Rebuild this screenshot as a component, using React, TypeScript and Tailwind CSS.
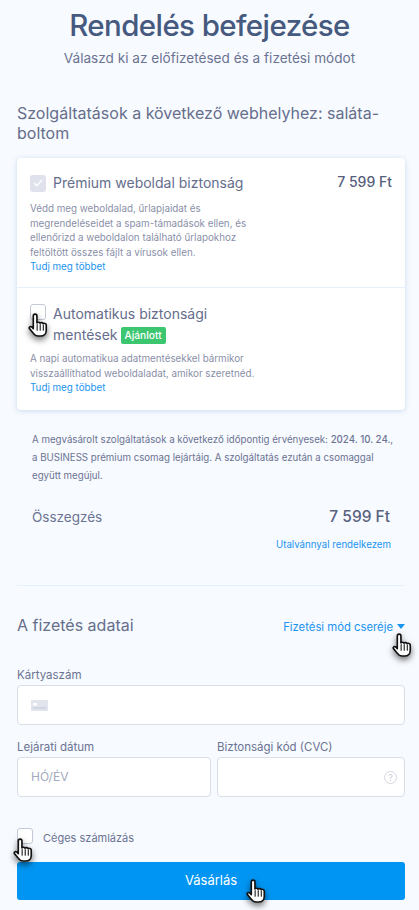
import React from "react";

const ff = { fontFamily: '"Inter", "Liberation Sans", sans-serif' };

// cursor drawn over the page, same hand every time
function Hand({ className }: { className: string }) {
  return (
    <svg className={`absolute pointer-events-none ${className}`} width="20" height="24" viewBox="1 1 19 25" style={{ filter: "drop-shadow(0 3px 3px rgba(0,0,0,0.55))" }}>
      <path
        d="M7.5 2.2c1.1 0 1.9.9 1.9 2v7.1c.3-.9 2.9-1.1 3.3.3.5-.9 2.800-.9 3.200.5.7-.7 3-.4 3.200 1.300v5.800c0 3-2.100 5.800-5.900 5.800h-2.600c-2.500 0-3.700-1.100-5-3L1.600 17.300c-.8-1.300.9-2.900 2.300-1.800l1.700 1.700V4.200c0-1.100.8-2 1.900-2z"
        fill="#fff"
        stroke="#111"
        strokeWidth="1.7"
        strokeLinejoin="round"
      />
      <path d="M9.600 13v6M12.800 13v6M16 13.500V19" stroke="#111" strokeWidth="1.1" strokeLinecap="round" />
    </svg>
  );
}

function ServiceText({ lines }: { lines: string[] }) {
  return (
    <div className="text-[9.8px] leading-[14.5px] text-[#8a8fa8] whitespace-nowrap">
      {lines.map((l) => (
        <div key={l}>{l}</div>
      ))}
      <a className="text-[#1b94f0]">Tudj meg többet</a>
    </div>
  );
}

export default function App() {
  return (
    <div style={ff} className="relative w-[419px] h-[910px] overflow-hidden bg-[#f7faff] text-[#5c6483]">
      <h1 className="pt-[6px] text-center text-[29.5px] leading-[38px] tracking-[-0.6px] font-medium text-[#46597f]">Rendelés befejezése</h1>
      <p className="mt-[4px] text-center text-[13.6px] leading-[20px] text-[#6b7392]">Válaszd ki az előfizetésed és a fizetési módot</p>

      <h2 className="ml-[17px] mt-[35px] text-[16px] leading-[20px] text-[#666e8c] whitespace-nowrap">
        Szolgáltatások a következő webhelyhez: saláta-
        <br />
        boltom
      </h2>

      <div className="ml-[17px] mt-[15px] w-[388px] h-[252px] rounded-[4px] bg-white shadow-[0_1px_5px_rgba(120,160,210,0.35)]">
        <div className="h-[130px] px-[13px] pt-[15px] border-b border-[#e6f0fa]">
          <div className="flex justify-between">
            <div className="flex items-center gap-[7px]">
              <span className="flex items-center justify-center w-[16px] h-[17px] rounded-[3px] bg-[#dfe2ec]">
                <svg width="10" height="8" viewBox="0 0 10 8" fill="none">
                  <path d="M1 4l2.800 2.800L9 1" stroke="#fff" strokeWidth="1.4" />
                </svg>
              </span>
              <span className="text-[14px] leading-[20px] text-[#656d8c]">Prémium weboldal biztonság</span>
            </div>
            <span className="text-[14px] leading-[18px] font-medium text-[#565e7c]">7 599 Ft</span>
          </div>
          <div className="mt-[9px]">
            <ServiceText
              lines={[
                "Védd meg weboldalad, űrlapjaidat és",
                "megrendeléseidet a spam-támadások ellen, és",
                "ellenőrizd a weboldalon található űrlapokhoz",
                "feltöltött összes fájlt a vírusok ellen.",
              ]}
            />
          </div>
        </div>
        <div className="px-[13px] pt-[15px]">
          <div className="flex gap-[7px]">
            <span className="mt-[1px] w-[16px] h-[16px] rounded-[3px] border border-[#c4c9d8] bg-white"></span>
            <div className="text-[14px] leading-[21px] text-[#656d8c]">
              Automatikus biztonsági
              <br />
              mentések
              <span className="ml-[3px] inline-block px-[4px] align-[1px] rounded-[2px] bg-[#3bc66f] text-white text-[10.2px] leading-[17px] font-medium">Ajánlott</span>
            </div>
          </div>
          <div className="mt-[7px]">
            <ServiceText lines={["A napi automatikua adatmentésekkel bármikor", "visszaállíthatod weboldaladat, amikor szeretnéd."]} />
          </div>
        </div>
      </div>

      <p className="ml-[32px] mt-[21px] text-[9.7px] leading-[18px] text-[#6b7392] whitespace-nowrap">
        A megvásárolt szolgáltatások a következő időpontig érvényesek: <b className="font-medium">2024. 10. 24.</b>,
        <br />a BUSINESS prémium csomag lejártáig. A szolgáltatás ezután a csomaggal
        <br />
        együtt megújul.
      </p>
      <div className="ml-[32px] mt-[22px] w-[358px] flex justify-between items-center">
        <span className="text-[13.5px] leading-[20px] text-[#6b7392]">Összegzés</span>
        <span className="text-[15.5px] leading-[20px] font-medium text-[#5a6280]">7 599 Ft</span>
      </div>
      <div className="ml-[32px] mt-[10px] w-[359px] text-right text-[9.7px] leading-[16px] text-[#1b94f0]">Utalvánnyal rendelkezem</div>

      <div className="ml-[17px] mt-[32px] w-[388px] border-t border-[#e6f0fa]"></div>

      <div className="ml-[17px] mt-[29px] w-[388px] flex justify-between items-center">
        <span className="text-[16px] leading-[20px] text-[#666e8c]">A fizetés adatai</span>
        <span className="flex items-center gap-[4px] text-[11.3px] leading-[16px] pt-[3px] text-[#1b94f0]">
          Fizetési mód cseréje
          <svg width="8" height="5" viewBox="0 0 8 5">
            <path d="M0 0h8L4 5z" fill="#1b94f0" />
          </svg>
        </span>
      </div>

      <div className="ml-[17px] mt-[32px] w-[388px]">
        <label className="block text-[11.5px] leading-[16px] text-[#6b7392]">Kártyaszám</label>
        <div className="mt-[2px] flex items-center h-[40px] px-[13px] rounded-[4px] border border-[#d8dde8] bg-white">
          <svg width="17" height="11" viewBox="0 0 17 11">
            <rect width="17" height="11" rx="1" fill="#e1e4ec" />
            <rect x="2" y="3" width="4" height="2.5" fill="#fff" />
            <rect x="2" y="7.5" width="13" height="1" fill="#c4c8d4" />
          </svg>
        </div>
      </div>

      <div className="ml-[17px] mt-[14px] w-[388px] grid grid-cols-[194px_188px] gap-x-[6px]">
        <div>
          <label className="block text-[11.5px] leading-[16px] text-[#6b7392]">Lejárati dátum</label>
          <div className="mt-[2px] flex items-center h-[40px] px-[13px] rounded-[4px] border border-[#d8dde8] bg-white text-[12px] text-[#a3aabd]">HÓ/ÉV</div>
        </div>
        <div>
          <label className="block text-[11.5px] leading-[16px] text-[#6b7392]">Biztonsági kód (CVC)</label>
          <div className="mt-[2px] flex items-center justify-end h-[40px] px-[7px] rounded-[4px] border border-[#d8dde8] bg-white">
            <span className="flex items-center justify-center w-[13px] h-[13px] rounded-full border border-[#d5d8e0] text-[9px] leading-none text-[#c8ccd6]">?</span>
          </div>
        </div>
      </div>

      <div className="ml-[17px] mt-[31px] flex items-start gap-[10px]">
        <span className="w-[16px] h-[16px] rounded-[3px] border border-[#c4c9d8] bg-white"></span>
        <span className="pt-[2px] text-[11px] leading-[16px] text-[#6b7392]">Céges számlázás</span>
      </div>

      <button className="block ml-[17px] mt-[16px] w-[388px] h-[38px] rounded-[3px] bg-[#0095f2] text-white text-[13px]">Vásárlás</button>

      <Hand className="left-[28px] top-[313px]" />
      <Hand className="left-[392px] top-[633px]" />
      <Hand className="left-[13px] top-[838px]" />
      <Hand className="left-[246px] top-[879px]" />
    </div>
  );
}
